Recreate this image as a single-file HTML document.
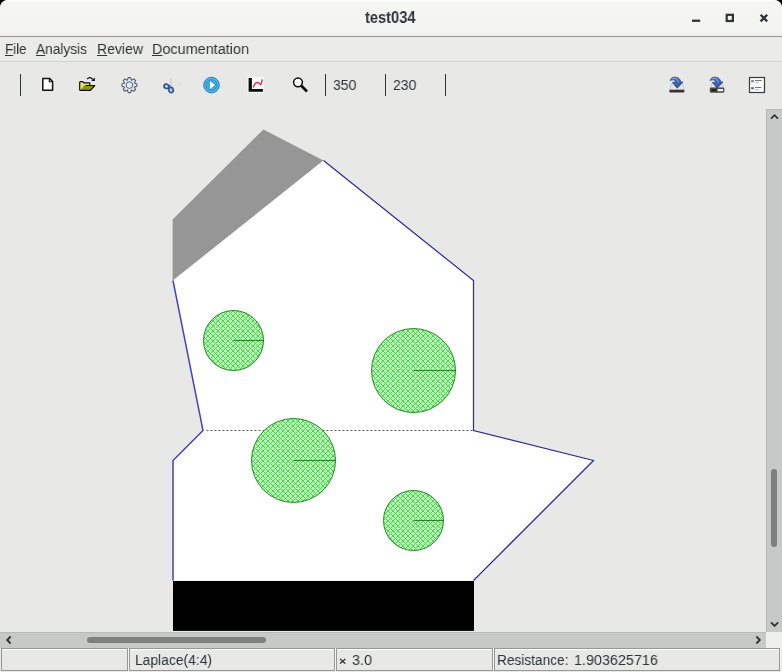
<!DOCTYPE html>
<html><head><meta charset="utf-8">
<style>
html,body{margin:0;padding:0;}
body{width:782px;height:672px;background:#000;overflow:hidden;position:relative;font-family:"Liberation Sans",sans-serif;color:#2e3436;}
#win{position:absolute;left:0;top:0;width:782px;height:672px;background:#e8e8e7;border-radius:8px 8px 0 0;overflow:hidden;}
#title{position:absolute;left:0;top:0;width:782px;height:36px;background:linear-gradient(#fdfdfd 0,#fdfdfd 1px,#f5f5f4 2px,#f4f4f3 32px,#ececeb 36px);border-bottom:1px solid #969695;}
.tx{position:absolute;white-space:nowrap;color:#2e3436;font-size:15.5px;line-height:16px;transform-origin:0 0;will-change:transform;}
#menu{position:absolute;left:0;top:37px;width:782px;height:24px;background:#ebebea;border-bottom:1px solid #d2d2d1;}
#tb{position:absolute;left:0;top:62px;width:782px;height:46px;}
.sep{position:absolute;top:74px;width:1px;height:22px;background:#2e3436;}
#canvas{position:absolute;left:0;top:108px;}
#vs{position:absolute;left:766px;top:108.5px;width:16px;height:523.5px;background:#c7c9c8;box-sizing:border-box;border-left:1px solid #b9bbba;border-top:1px solid #b9bbba;}
#hs{position:absolute;left:0;top:632px;width:766px;height:16px;background:#c7c9c8;box-sizing:border-box;border-top:1px solid #b9bbba;}
.cell{position:absolute;top:648px;height:23px;border:1px solid #979796;box-sizing:border-box;box-shadow:inset 0 1px 0 #fff, 1px 0 0 #f6f6f5;}
</style></head><body>
<div id="win">
<div id="title">
<svg style="position:absolute;left:680px;top:0" width="102" height="36">
<rect x="12" y="19.6" width="8.2" height="2.3" fill="#2e3436"/>
<rect x="46.7" y="14.8" width="6.2" height="6.2" fill="none" stroke="#2e3436" stroke-width="2.2"/>
<path d="M80.6 14.8 L87.2 21.4 M87.2 14.8 L80.6 21.4" stroke="#2e3436" stroke-width="2.3"/>
</svg>
</div>
<div class="tx" id="t0" style="left:365.2px;top:9.6px;font-weight:bold;font-size:15.8px;transform:scaleX(0.927)">test034</div>
<div id="menu"></div>
<div class="tx" id="t1" style="left:4.6px;top:40.5px;transform:scaleX(0.861)"><u>F</u>ile</div>
<div class="tx" id="t2" style="left:36.2px;top:40.5px;transform:scaleX(0.883)"><u>A</u>nalysis</div>
<div class="tx" id="t3" style="left:97.3px;top:40.5px;transform:scaleX(0.905)"><u>R</u>eview</div>
<div class="tx" id="t4" style="left:152.3px;top:40.5px;transform:scaleX(0.930)"><u>D</u>ocumentation</div>
<div class="sep" style="left:20px"></div>
<div class="sep" style="left:325px"></div>
<div class="sep" style="left:385px"></div>
<div class="sep" style="left:445px"></div>
<div class="tx" id="t5" style="left:332.7px;top:76.9px;transform:scaleX(0.904)">350</div>
<div class="tx" id="t6" style="left:392.7px;top:76.9px;transform:scaleX(0.904)">230</div>
<svg id="icons" style="position:absolute;left:0;top:62px" width="782" height="46" viewBox="0 62 782 46">
<!-- new doc -->
<path d="M42.8 78.4 H49.5 L52.6 81.5 V90.3 H42.8 Z" fill="#fff" stroke="#111" stroke-width="1.5" stroke-linejoin="round"/>
<path d="M49.3 78.6 V81.8 H52.4" fill="none" stroke="#111" stroke-width="1.1"/>
<!-- open folder -->
<path d="M79.7 90.2 V82.2 L80.4 81.6 H82.8 L83.8 82.8 H89.8 V85.6 H83.4 L80.6 90.2 Z" fill="#e4e672"/>
<path d="M79.7 90.4 V82.2 L80.4 81.6 H82.8 L83.8 82.8 H89.8 V85.2" fill="none" stroke="#0c0c0c" stroke-width="1.2" stroke-linejoin="round"/>
<path d="M80.8 90 L83.8 85.6 H94.4 L90.6 90 Z" fill="#8f9424"/>
<path d="M85.4 85.5 H94.8 L90.4 90.3 H79.8" fill="none" stroke="#0c0c0c" stroke-width="1.2" stroke-linejoin="round"/>
<path d="M87.2 79 Q89.7 76 92.8 79.4" fill="none" stroke="#111" stroke-width="1.25"/>
<path d="M94.8 77.4 V81 H91.2 Z" fill="#0c0c0c"/>
<!-- gear -->
<g transform="translate(129.4,85.1)">
<path d="M-1.19 -7.51 L1.19 -7.51 L2.03 -4.90 L4.47 -6.15 L6.15 -4.47 L4.90 -2.03 L7.51 -1.19 L7.51 1.19 L4.90 2.03 L6.15 4.47 L4.47 6.15 L2.03 4.90 L1.19 7.51 L-1.19 7.51 L-2.03 4.90 L-4.47 6.15 L-6.15 4.47 L-4.90 2.03 L-7.51 1.19 L-7.51 -1.19 L-4.90 -2.03 L-6.15 -4.47 L-4.47 -6.15 L-2.03 -4.90 Z" fill="#dde9f2" stroke="#56626e" stroke-width="1.1" stroke-linejoin="round"/>
<circle cx="0" cy="0" r="3.3" fill="#e3ecf3" stroke="#56626e" stroke-width="1"/>
</g>
<!-- scissors -->
<path d="M170.2 84.6 L170.7 77.8 L171.5 77.8 L171.6 84.6 Z" fill="#c3c7cb"/>
<path d="M172 84.2 Q173.6 81.4 176.4 81.6 Q180.4 82 181 83.2 Q178 85.6 172.6 85.6 Z" fill="#e9efe6" stroke="#d3d6d6" stroke-width="0.7"/>
<ellipse cx="166.4" cy="86.3" rx="2.5" ry="2.1" transform="rotate(20 166.4 86.3)" fill="#a9d6f6" stroke="#2f5583" stroke-width="1.6"/>
<ellipse cx="171" cy="90" rx="2.3" ry="2.6" transform="rotate(-20 171 90)" fill="#aecbf6" stroke="#2f5583" stroke-width="1.6"/>
<path d="M168.4 87.6 L170.6 85.2" stroke="#3c6694" stroke-width="1.2"/>
<!-- play -->
<circle cx="211.5" cy="85.1" r="8.9" fill="#d6ecf9" opacity="0.7"/>
<circle cx="211.5" cy="85.1" r="7.8" fill="#4dbaef" stroke="#2b7cb2" stroke-width="1"/>
<circle cx="211.5" cy="85.1" r="5.6" fill="#3fa9e2" stroke="#2a86c0" stroke-width="0.8"/>
<path d="M209.2 80.2 L216 85.1 L209.2 89.9 Z" fill="#1f6f9f" opacity="0.55"/><path d="M209.8 80.9 L215.2 85.1 L209.8 89.2 Z" fill="#fdfeff"/>
<!-- chart -->
<rect x="247.4" y="77" width="16.6" height="16" fill="#f8f8f8"/>
<path d="M248.6 77.9 H251.9 V89 H262.9 V91.8 H248.6 Z" fill="#0a0a0a"/>
<path d="M253.2 87.4 L254.8 84 L256.4 82.6 L258.6 82.6 L260.4 84.6 L261 84 L262.4 79.4" fill="none" stroke="#d8243a" stroke-width="1.3" stroke-linejoin="round"/>
<!-- magnifier -->
<circle cx="298" cy="82.3" r="4.4" fill="#fbfbfb" stroke="#0c0c0c" stroke-width="1.5"/>
<path d="M301.3 85.7 L307 91.5" stroke="#0c0c0c" stroke-width="2.7" stroke-linecap="butt"/>
<!-- save -->
<defs><linearGradient id="ag" x1="0" y1="0" x2="1" y2="1"><stop offset="0" stop-color="#5f8bd0"/><stop offset="0.5" stop-color="#3b66b4"/><stop offset="1" stop-color="#2d55a2"/></linearGradient></defs>
<g id="sv1">
<path d="M671.6 83.6 H682.4 L684.2 89.8 H669.6 Z" fill="#e3e7ec" stroke="#b4bac2" stroke-width="0.6"/>
<rect x="669.4" y="89.8" width="15" height="2.8" rx="0.8" fill="#3c3434"/>
<path id="arw" d="M670.3 80.6 Q670.8 76.9 675.4 77.2 Q680.2 77.6 680.6 82 L683 82 L677.2 88.2 L672.4 82.4 L675.4 82.4 Q675.6 80 673.6 79.8 Q671.6 79.6 670.3 80.6 Z" fill="url(#ag)" stroke="#25447f" stroke-width="0.8" stroke-linejoin="round"/>
<path d="M671.6 79 Q673.6 78 675.8 78.6 Q678.2 79.6 678.4 82.6" fill="none" stroke="#9dbbe6" stroke-width="0.9" opacity="0.8"/>
</g>
<g id="sv2">
<path d="M711.8 83.6 H722.2 L723.4 87.6 H710.6 Z" fill="#e3e7ec" stroke="#b4bac2" stroke-width="0.6"/>
<rect x="709.8" y="87.5" width="14.5" height="5.2" rx="1.2" fill="#4b4b47"/>
<rect x="711.6" y="89" width="5" height="2.2" fill="#1c261a"/>
<rect x="717.6" y="89" width="5.4" height="2.2" fill="#f4f4f4"/>
<use href="#arw" x="40" y="0"/>
<path d="M711.6 79 Q713.6 78 715.8 78.6 Q718.2 79.6 718.4 82.6" fill="none" stroke="#9dbbe6" stroke-width="0.9" opacity="0.8"/>
</g>
<!-- list -->
<rect x="749.5" y="77.5" width="15" height="15" fill="#fbfbfb" stroke="#3a3a3a" stroke-width="1.2"/>
<rect x="751.2" y="80.2" width="2.6" height="2" fill="#5577b0"/>
<rect x="751.2" y="87.2" width="2.6" height="2" fill="#445a88"/>
<rect x="755" y="80" width="6.8" height="1" fill="#777"/>
<rect x="755" y="82.2" width="4" height="0.9" fill="#bbb"/>
<rect x="755" y="87" width="6.2" height="1" fill="#777"/>
<rect x="755" y="89.2" width="4" height="0.9" fill="#bbb"/>
</svg>
<svg id="canvas" width="766" height="524" viewBox="0 108 766 524">
<defs>
<pattern id="h" width="5" height="5" patternUnits="userSpaceOnUse" x="-0.5" y="2.5">
<rect width="5" height="5" fill="#b2f9b2"/>
<g fill="#5ccc5c" shape-rendering="crispEdges"><rect x="0" y="0" width="1" height="1"/><rect x="1" y="1" width="1" height="1"/><rect x="2" y="2" width="1" height="1"/><rect x="3" y="3" width="1" height="1"/><rect x="4" y="4" width="1" height="1"/><rect x="1" y="4" width="1" height="1"/><rect x="2" y="3" width="1" height="1"/><rect x="3" y="2" width="1" height="1"/><rect x="4" y="1" width="1" height="1"/></g>
</pattern>
</defs>
<g transform="translate(0.5,0.5)">
<polygon points="262.9,128.9 323,160 172.1,280 172.1,218.9" fill="#969696"/>
<polygon points="323,160 473,280 473,430 593,460 473,580 173,580 173,460 203,430 173,280" fill="#fff"/>
<rect x="172.5" y="580.5" width="301" height="49.9" fill="#000"/>
<polyline points="172.5,580 172.5,460 202.5,430 172.5,280" fill="none" stroke="#4543c2" stroke-width="1.5"/>
<polyline points="323,160 473,280 473,430 593,460 473,580" fill="none" stroke="#2c2c9c" stroke-width="1.25"/>
<line x1="206" y1="430" x2="473" y2="430" stroke="#5c5c5c" stroke-width="1" stroke-dasharray="2 2"/>
<g stroke="#1e8c1e" stroke-width="1">
<circle cx="233" cy="340" r="30" fill="url(#h)"/><line x1="233" y1="340" x2="263" y2="340" shape-rendering="crispEdges"/>
<circle cx="413" cy="370" r="42" fill="url(#h)"/><line x1="413" y1="370" x2="455" y2="370" shape-rendering="crispEdges"/>
<circle cx="293" cy="460" r="42" fill="url(#h)"/><line x1="293" y1="460" x2="335" y2="460" shape-rendering="crispEdges"/>
<circle cx="413" cy="520" r="30" fill="url(#h)"/><line x1="413" y1="520" x2="443" y2="520" shape-rendering="crispEdges"/>
</g>
</g>
</svg>
<div id="vs"></div>
<div id="hs"></div>
<div style="position:absolute;left:766px;top:632px;width:16px;height:16px;background:#efefee"></div>
<svg style="position:absolute;left:0;top:108px" width="782" height="540" viewBox="0 108 782 540">
<path d="M771 118.6 L774.5 115.2 L778 118.6" fill="none" stroke="#2e3436" stroke-width="1.8"/>
<path d="M771 622.3 L774.6 625.9 L778.2 622.3" fill="none" stroke="#2e3436" stroke-width="1.8"/>
<path d="M10.6 636.5 L7.2 640 L10.6 643.5" fill="none" stroke="#2e3436" stroke-width="1.8"/>
<path d="M756.4 636.5 L759.8 640 L756.4 643.5" fill="none" stroke="#2e3436" stroke-width="1.8"/>
<rect x="771" y="469" width="6" height="78" rx="3" fill="#7e807f"/>
<rect x="87" y="637" width="179" height="6" rx="3" fill="#7e807f"/>
</svg>
<div class="cell" style="left:1px;width:127px"></div>
<div class="cell" style="left:129px;width:206px"></div>
<div class="cell" style="left:336px;width:157px"></div>
<div class="cell" style="left:494px;width:286px"></div>
<div class="tx" id="t7" style="left:135.4px;top:651.5px;transform:scaleX(0.894)">Laplace(4:4)</div>
<div class="tx" id="t8" style="left:338.8px;top:652.7px;font-size:11.5px;font-weight:bold;transform:scaleX(1.101)">×</div>
<div class="tx" id="t9" style="left:351.6px;top:651.5px;transform:scaleX(0.928)">3.0</div>
<div class="tx" id="t10" style="left:496.6px;top:651.5px;transform:scaleX(0.882)">Resistance:</div>
<div class="tx" id="t11" style="left:573.9px;top:651.5px;transform:scaleX(0.926)">1.903625716</div>
</div>
</body></html>
